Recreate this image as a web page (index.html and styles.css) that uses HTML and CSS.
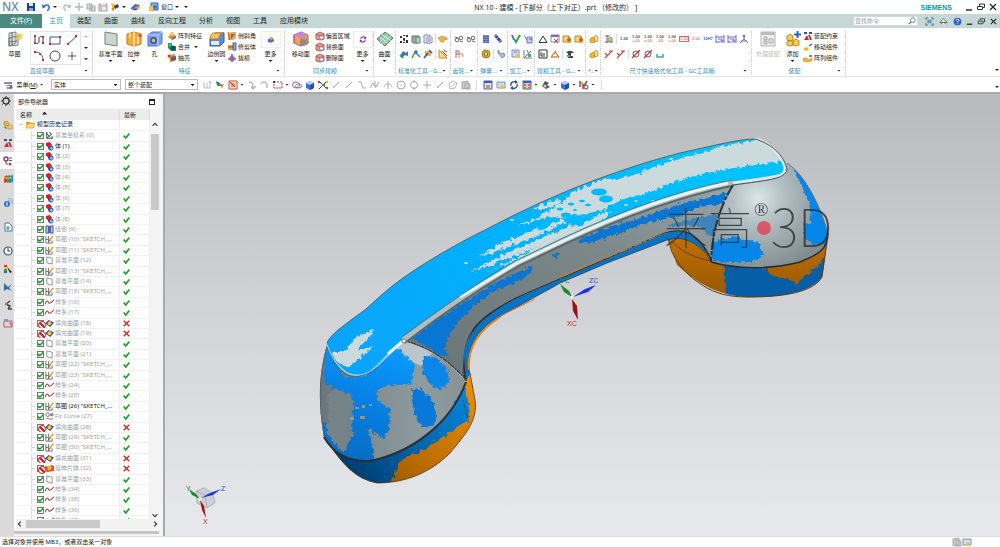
FILE: index.html
```html
<!DOCTYPE html>
<html lang="zh-CN">
<head>
<meta charset="utf-8">
<title>NX 10 - 建模</title>
<link rel="stylesheet" href="styles.css">
</head>
<body>
<svg class="defs" aria-hidden="true">
<symbol id="save" viewBox="0 0 10 10"><path d="M1 1h8v8H1z" fill="#1d3f94"/><path d="M3 1h4v3H3z" fill="#dfe7f5"/><path d="M3 6h4v3H3z" fill="#8fa5d0"/></symbol>
<symbol id="undo" viewBox="0 0 10 10"><path d="M3 4.500C5 2 9 3 8 6.500 7.500 8 6 8.500 6 8.500" fill="none" stroke="#2f6fd0" stroke-width="1.500"/><path d="M1 2l.5 4.500L5 5z" fill="#2f6fd0"/></symbol>
<symbol id="redo" viewBox="0 0 10 10"><path d="M7 4.500C5 2 1 3 2 6.500 2.500 8 4 8.500 4 8.500" fill="none" stroke="#a9b9c9" stroke-width="1.300"/><path d="M9 2l-.5 4.500L5 5z" fill="#a9b9c9"/></symbol>
<symbol id="cut" viewBox="0 0 10 10"><path d="M5 1v8M1 5h8" stroke="#b5b5b5" stroke-width="1.400"/></symbol>
<symbol id="copy" viewBox="0 0 10 10"><path d="M1 2h5v5H1zM4 4h5v5H4z" fill="#d8d8d8" stroke="#a8a8a8"/></symbol>
<symbol id="paste" viewBox="0 0 10 10"><path d="M1 2h8v7H1z" fill="#c5c5c5" stroke="#aaa"/><path d="M3 1h4v2H3zM4 5h4v3H4z" fill="#eee"/></symbol>
<symbol id="brush" viewBox="0 0 10 10"><path d="M1 1l6 2-4 6z" fill="#f3c12d"/><path d="M4 4l4-2 1 3-4 2z" fill="#2c3e8e"/><circle cx="3" cy="7" r="1.500" fill="#dd8d1e"/></symbol>
<symbol id="wave" viewBox="0 0 10 10"><path d="M0 6l4-4 5 1-3 5z" fill="#3f6bd0"/><path d="M4 5l3-1 2 2-4 2z" fill="#f0a020"/><path d="M0 6l3 2 3-1" stroke="#1d3f94" fill="none"/></symbol>
<symbol id="window" viewBox="0 0 10 10"><path d="M2 1h7v7H2z" fill="#8bb6ea" stroke="#2c61b5"/><path d="M0 4h4v5H0z" fill="#f5c842"/><circle cx="6" cy="5" r="2" fill="#3a6fd0"/></symbol>
<symbol id="min" viewBox="0 0 10 10"><path d="M2 8h6" stroke="#222" stroke-width="1.400"/></symbol>
<symbol id="restore" viewBox="0 0 10 10"><path d="M1.500 4.500h5v3h-5zM3.500 4V2h5v3.500H7" fill="none" stroke="#333"/></symbol>
<symbol id="close" viewBox="0 0 10 10"><path d="M2 2l6 6M8 2L2 8" stroke="#222" stroke-width="1.200"/></symbol>
<symbol id="lens" viewBox="0 0 10 10"><circle cx="6" cy="4" r="3" fill="none" stroke="#666"/><path d="M4 6L1 9" stroke="#666" stroke-width="1.400"/></symbol>
<symbol id="full" viewBox="0 0 10 10"><path d="M1 3V1h2M7 1h2v2M9 7v2H7M3 9H1V7" fill="none" stroke="#555"/><path d="M2.500 3h5v4h-5z" fill="#5d9cdd"/></symbol>
<symbol id="hat" viewBox="0 0 10 10"><path d="M1 6l4-4 4 4zM2.500 8L5 5.500 7.500 8" fill="#fff" stroke="#555"/></symbol>
<symbol id="help" viewBox="0 0 10 10"><circle cx="5" cy="5" r="4.300" fill="#2f63c9"/><path d="M3.500 4c0-2 3-2 3 0 0 1-1.500 1-1.500 2M5 7v1" fill="none" stroke="#fff"/></symbol>
<symbol id="b-sketch" viewBox="0 0 16 16"><path d="M2 2l7-1v11l-7 3z" fill="#d5d9da" stroke="#7c8587"/><path d="M2 7l9-2v9l-9 1zM5 2v12M2 11l8-1" fill="none" stroke="#6d7678"/><path d="M12 2v7M9 5h7M10 3l5 5M15 3l-5 5" stroke="#f4cd24" stroke-width="1.200"/></symbol>
<symbol id="g-profile" viewBox="0 0 12 12"><path d="M2 2v6c0 2 4 2 4 0V4c0-2 4-2 4 0v5" fill="none" stroke="#444"/><path d="M1 1h2v2H1zM1 8h2v2H1zM9 8h2v2H9zM9 2h2v2H9z" fill="#d02b2b"/></symbol>
<symbol id="g-rect" viewBox="0 0 12 12"><path d="M1 3h10v7H1z" fill="#fff" stroke="#555"/><path d="M10 2h2v2h-2zM0 9h2v2H0z" fill="#d02b2b"/></symbol>
<symbol id="g-line" viewBox="0 0 12 12"><path d="M2 10l9-8" stroke="#555"/><path d="M1 9h2v2H1zM9 1h2v2H9z" fill="#d02b2b"/></symbol>
<symbol id="g-arc" viewBox="0 0 12 12"><path d="M2 2c6 0 8 4 8 8" fill="none" stroke="#555"/><path d="M1 1h2v2H1zM9 9h2v2H9zM6 3h2v2H6z" fill="#d02b2b"/></symbol>
<symbol id="g-circle" viewBox="0 0 12 12"><circle cx="6" cy="6" r="5" fill="#fff" stroke="#444"/></symbol>
<symbol id="g-plus" viewBox="0 0 12 12"><path d="M6 2v8M2 6h8" stroke="#555"/></symbol>
<symbol id="b-plane" viewBox="0 0 16 16"><path d="M2 1l12 2v12L2 13z" fill="#cbd5d2" stroke="#74807c"/></symbol>
<symbol id="b-extrude" viewBox="0 0 16 16"><path d="M1 3l7-2 7 2v10l-7 2-7-2z" fill="#f2ab3c" stroke="#c77b16"/><path d="M8 1v14M4 2v5M12 4v9" stroke="#fde2ac" stroke-width="1.500"/><path d="M11 5l4-2 1 3z" fill="#e6442e"/></symbol>
<symbol id="b-hole" viewBox="0 0 16 16"><path d="M1 4l4-3h10v11l-4 3H1z" fill="#7b9fe8" stroke="#5577c4"/><path d="M1 4h10v11M11 4l4-3" stroke="#c4d6ff" fill="none"/><circle cx="6.500" cy="9.500" r="3.500" fill="#3a5bb4"/><circle cx="6.500" cy="9.500" r="1.700" fill="#f0c148"/></symbol>
<symbol id="array" viewBox="0 0 10 10"><path d="M1 6l3-3 4 1 1 2-4 3z" fill="#e98f22"/><circle cx="5" cy="3" r="2" fill="#f5c653"/><path d="M5 7l4-2v2L5 9z" fill="#4470cb"/></symbol>
<symbol id="unite" viewBox="0 0 10 10"><path d="M1 1h4v3h4v5H4L1 6z" fill="#1f9a5e"/><circle cx="6" cy="6" r="2.500" fill="#164f66"/><circle cx="3" cy="3" r="1.500" fill="#3cc16f"/></symbol>
<symbol id="shell" viewBox="0 0 10 10"><path d="M2 2l6-1v7L3 9z" fill="#e98f22"/><path d="M4 4l5-1v4L4 8z" fill="#3c61b5"/><circle cx="2" cy="3" r="1.500" fill="#d13c2c"/></symbol>
<symbol id="b-edge" viewBox="0 0 16 16"><path d="M1 8l5-6h9v9l-4 4H1z" fill="#5b8bdd" stroke="#37599e"/><path d="M1 8c0-4 2-6 5-6h9c-3 0-5 2-5 6z" fill="#f5c35a" stroke="#b77c1a"/><path d="M2 10h8v4H2z" fill="#dfe9fb"/></symbol>
<symbol id="chamfer" viewBox="0 0 10 10"><path d="M1 3l3-2h5v6L6 9H1z" fill="#f0a945"/><path d="M4 3h4l-4 5z" fill="#476fd0"/><path d="M1 1l2 8" stroke="#d2452d"/></symbol>
<symbol id="trim" viewBox="0 0 10 10"><path d="M1 3h5v5H1z" fill="#ef9f35"/><path d="M6 1h3v7H6z" fill="#7fa8ee" stroke="#3a61b8"/><path d="M1 5h6" stroke="#c23e2a"/></symbol>
<symbol id="draft" viewBox="0 0 10 10"><path d="M5 1l4 5-4 3-4-3z" fill="#6f93dd"/><path d="M5 1v8M1 6h8" stroke="#c9414e"/></symbol>
<symbol id="more" viewBox="0 0 10 10"><path d="M1 5l3-2 4 1 1 3-4 2-4-1z" fill="#3f70cf"/><circle cx="5.500" cy="3.500" r="2" fill="#f0a030"/></symbol>
<symbol id="b-move" viewBox="0 0 16 16"><path d="M1 4l7-3 7 3v8l-7 3-7-3z" fill="#f2a548" stroke="#a15ca4"/><path d="M8 1l7 3-7 3-7-3z" fill="#c486d8"/><path d="M8 7v8M1 4v8" stroke="#a15ca4"/><path d="M11 6v9M7 11h9M8 8l6 6M14 8l-6 6" stroke="#888" stroke-width="1.200"/></symbol>
<symbol id="face" viewBox="0 0 10 10"><path d="M1 3l4-2 4 2v5L5 9 1 8z" fill="#f2a548" stroke="#a15ca4"/><path d="M1 3l4 2 4-2" fill="none" stroke="#a15ca4"/><circle cx="6.500" cy="6.500" r="2" fill="#fff" stroke="#b56a8a"/></symbol>
<symbol id="sync" viewBox="0 0 10 10"><path d="M2 4c1-3 5-3 6-1M8 6c-1 3-5 3-6 1" fill="none" stroke="#8b3bb0" stroke-width="1.500"/><path d="M9 1v4L6 4zM1 9V5l3 1z" fill="#8b3bb0"/></symbol>
<symbol id="b-surf" viewBox="0 0 16 16"><path d="M0 8l8-7 8 6-8 8z" fill="#8fc4a4" stroke="#4c7f63"/><path d="M2.500 6l8 6M5 3.500l8.500 6M3 11l8-7.500M5.500 13L13.500 5" stroke="#e6f4ec" stroke-width=".8"/></symbol>
<symbol id="dots" viewBox="0 0 10 10"><path d="M1 2h2v2H1zM4 4h2v2H4zM7 1h2v2H7zM1 7h2v2H1zM7 6h2v3H7zM4 1h2v1H4zM4 8h2v1H4z" fill="#333"/><path d="M4 6h2v1H4z" fill="#d33"/></symbol>
<symbol id="db" viewBox="0 0 10 10"><path d="M1 2h7v6c0 1.500-7 1.500-7 0z" fill="#9aaab0" stroke="#66757c"/><path d="M5 3h4v6H5z" fill="#b8d3c5" stroke="#5f8672"/></symbol>
<symbol id="sheet" viewBox="0 0 10 10"><path d="M1 1h6v8H1z" fill="#dfe4f4" stroke="#8793b7"/><path d="M4 3h5v6H4z" fill="#fff" stroke="#8793b7"/><path d="M5 5h3M5 7h3" stroke="#76a"/></symbol>
<symbol id="hand" viewBox="0 0 10 10"><path d="M0 4l4-2 5 2v2L6 5v3H3z" fill="#f0b64c" stroke="#c07d1c" stroke-width=".6"/></symbol>
<symbol id="tri" viewBox="0 0 10 10"><path d="M1 7l3-5 3 2 2-2v5L6 6 3 9z" fill="#3a6fd0"/><path d="M1 6l3 3" stroke="#2ea14e" stroke-width="1.500"/></symbol>
<symbol id="tri2" viewBox="0 0 10 10"><path d="M1 9l3-6 3 3 2 2" fill="none" stroke="#2ea14e" stroke-width="1.500"/><circle cx="5" cy="3" r="1.700" fill="#3a6fd0"/></symbol>
<symbol id="tri3" viewBox="0 0 10 10"><path d="M2 2h6v5H2z" fill="#f2b23c"/><path d="M1 9l4-5M6 1l3 3" stroke="#2c5fc0" stroke-width="1.700"/></symbol>
<symbol id="ruler" viewBox="0 0 10 10"><path d="M1 1v8h8z" fill="#f7dd90" stroke="#c2902d"/><path d="M4 2l5 5M6 1l3 2" stroke="#d33"/></symbol>
<symbol id="gears" viewBox="0 0 10 10"><circle cx="3" cy="6" r="1.800" fill="none" stroke="#666"/><circle cx="7" cy="4" r="1.800" fill="none" stroke="#666"/><path d="M1 3l3 1M6 7l3 1" stroke="#666"/></symbol>
<symbol id="gear3" viewBox="0 0 10 10"><path d="M2 1v8M2 2h3v3H2" fill="none" stroke="#8e62b4"/><path d="M5 9V5h4v3" fill="none" stroke="#d88b2b"/></symbol>
<symbol id="spring" viewBox="0 0 10 10"><path d="M2 1h6v8H2z" fill="#7d8ed8"/><path d="M2 2.500h6M2 4.500h6M2 6.500h6M2 8.500h6" stroke="#4a56a6" stroke-width=".8"/></symbol>
<symbol id="spring2" viewBox="0 0 10 10"><path d="M2 1l6 7" stroke="#3746a8" stroke-width="3"/><path d="M1 3l3-2M3 5l3-2M5 8l3-2" stroke="#cdd4fa" stroke-width=".7"/></symbol>
<symbol id="disc" viewBox="0 0 10 10"><circle cx="5" cy="5" r="4" fill="#e6b83c" stroke="#a27a17"/><ellipse cx="5" cy="5" rx="1.500" ry="2.200" fill="#fff" stroke="#77560b"/></symbol>
<symbol id="tag" viewBox="0 0 10 10"><path d="M2 1l3 4 3-1 1 3-3 2-4-5z" fill="#b8b8dd" stroke="#66689d" stroke-width=".7"/></symbol>
<symbol id="vcheck" viewBox="0 0 10 10"><path d="M1 1l2 5" stroke="#4b72d6" stroke-width="2"/><path d="M3 5l2 3 4-7" fill="none" stroke="#2aac3f" stroke-width="2"/></symbol>
<symbol id="mach" viewBox="0 0 10 10"><path d="M1 1l3 5M4 3h5v6H4z" fill="#c5cff0" stroke="#6f7fb8"/><path d="M6 5h3" stroke="#e33"/></symbol>
<symbol id="sheetg" viewBox="0 0 10 10"><path d="M1 1h7v7H1z" fill="#d5dcf2" stroke="#8792bb"/><path d="M5 5h4v4H5z" fill="#e3c45e"/><path d="M3 3h3" stroke="#6b79b0"/></symbol>
<symbol id="axes" viewBox="0 0 10 10"><path d="M1 1v8h8M2 8l6-6M4 1l3 7" fill="none" stroke="#777"/><path d="M5 5h3v3H5z" fill="#59a868"/></symbol>
<symbol id="delta" viewBox="0 0 10 10"><path d="M1 8.500L5 2l4 6.500z" fill="none" stroke="#333"/></symbol>
<symbol id="calx" viewBox="0 0 10 10"><path d="M1 1h8v7H1z" fill="#fff" stroke="#88a"/><path d="M1 1h8v2H1z" fill="#86b"/><path d="M4 5l4 4M8 5L4 9" stroke="#d33"/></symbol>
<symbol id="star" viewBox="0 0 10 10"><path d="M1 2h6v6H1z" fill="#f3d57c" stroke="#ba8c2e"/><path d="M5 4h4v5H5z" fill="#f1b32b"/><path d="M7 3v5M5 6h4" stroke="#c33"/></symbol>
<symbol id="boxb" viewBox="0 0 10 10"><path d="M1 1h8v8H1z" fill="#fff" stroke="#333"/><path d="M3 3v4h4M4 5h3" stroke="#333" fill="none"/></symbol>
<symbol id="slope" viewBox="0 0 10 10"><path d="M1 8l5-6M1 8h8" stroke="#c79a3a" stroke-width="1.400"/><path d="M5 3l4 5" stroke="#c33"/></symbol>
<symbol id="pick" viewBox="0 0 10 10"><path d="M1 4c2-3 6-3 8 0H6v3h2v2H3V4z" fill="#444"/><path d="M2 6h3v2H2z" fill="#5aa1bd"/></symbol>
<symbol id="cubes" viewBox="0 0 10 10"><path d="M1 5l3-2 2 1v4L3 9 1 8z" fill="#eab731" stroke="#a47b15" stroke-width=".6"/><path d="M5 3l2-2 2 2v4L6 8z" fill="#f6d978" stroke="#a47b15" stroke-width=".6"/></symbol>
<symbol id="dim0" viewBox="0 0 10 10"><path d="M1 2h5M3 1v8M7 3v5M1 8h8" stroke="#a55"/><path d="M4 4h4v3H4z" fill="#bcd7bd" stroke="#6a6"/></symbol>
<symbol id="d-blue" viewBox="0 0 10 10"><path d="M1 1v8M9 1v8M1 3h8M3 5h4M1 8h4M6 6h2v2H6z" fill="none" stroke="#6a6ad8"/></symbol>
<symbol id="d-tree" viewBox="0 0 10 10"><path d="M5 1v4M1 9l4-4 4 4M2 7h6" fill="none" stroke="#6a6ad8"/><circle cx="5" cy="2" r="1.300" fill="#6a6ad8"/></symbol>
<symbol id="r-slash" viewBox="0 0 10 10"><path d="M1 9l7-7M1 4l2 2M5 2h4" fill="none" stroke="#cc4848" stroke-width="1.200"/></symbol>
<symbol id="r-circ" viewBox="0 0 10 10"><circle cx="5" cy="5" r="3" fill="none" stroke="#666"/><path d="M1 9l8-8" stroke="#d33" stroke-width="1.200"/></symbol>
<symbol id="tray" viewBox="0 0 10 10"><path d="M2 5v3h6V5" fill="none" stroke="#4aa59a" stroke-width="1.500"/></symbol>
<symbol id="b-proc" viewBox="0 0 16 16"><path d="M1 1h14v14H1z" fill="#eee" stroke="#b4b4b4"/><path d="M1 1h14v3H1z" fill="#bbb"/><path d="M4 6h3v3H4zM4 10h3v3H4zM9 8h4v4H9z" fill="#ddd" stroke="#aaa"/></symbol>
<symbol id="b-add" viewBox="0 0 16 16"><path d="M2 5l3-2 3 2v4l-3 1-3-1zM2 11l3-2 3 2v3l-3 1-3-1zM8 10l3-2 3 2v4l-3 1-3-1z" fill="#f3cc5e" stroke="#bb8b1d"/><path d="M12.500 0v7M9 3.500h7" stroke="#2d62c9" stroke-width="2"/></symbol>
<symbol id="constr" viewBox="0 0 10 10"><path d="M1 1h3v2H1zM6 1h3v2H6z" fill="#3350a8"/><path d="M1 9l3-5 2 5z" fill="#c22f3b"/><path d="M5 4h2l2 5H7z" fill="#d02b2b"/></symbol>
<symbol id="movec" viewBox="0 0 10 10"><path d="M1 6l3-1 2 2-2 2-3-1z" fill="#f0b930"/><path d="M6 4l3-2" stroke="#2d62c9" stroke-width="1.500"/></symbol>
<symbol id="arrc" viewBox="0 0 10 10"><path d="M0 5h4l1 2 4-2v3L4 9 0 8z" fill="#f0b930" stroke="#b88515" stroke-width=".5"/><path d="M6 3h3" stroke="#2d62c9" stroke-width="1.500"/></symbol>
<symbol id="menu" viewBox="0 0 10 10"><path d="M0 2h8v2H0zM2 5h6v1H2zM3 7h5v2H3z" fill="#8191a8"/><path d="M5 4l4 3-2 2z" fill="#567"/></symbol>
<symbol id="t-a" viewBox="0 0 10 10"><path d="M2 2v6h3V3M5 8h3V2M7 3l1-2 1 2" fill="none" stroke="#bbb"/></symbol>
<symbol id="t-b" viewBox="0 0 10 10"><path d="M1 1l4 2v3H2z" fill="#2aa06a"/><path d="M5 4h4l-2 5z" fill="#e7a926"/><path d="M2 2l5 4" stroke="#2853b2"/></symbol>
<symbol id="t-c" viewBox="0 0 10 10"><path d="M1 1h8v8H1z" fill="#fbe4de" stroke="#d24a36"/><path d="M3 3h4v4H3z" fill="#e8a626"/><path d="M2 2l5 5" stroke="#b33"/></symbol>
<symbol id="t-d" viewBox="0 0 10 10"><path d="M2 2c4 0 4 2 4 6M4 6l2 3 3-3" fill="none" stroke="#b5b5b5" stroke-width="1.300"/></symbol>
<symbol id="t-e" viewBox="0 0 10 10"><path d="M1 4c1-3 5-3 6 1v3" fill="none" stroke="#c5c5c5" stroke-width="1.800"/></symbol>
<symbol id="t-rect" viewBox="0 0 10 10"><path d="M1 2h8v6H1z" fill="none" stroke="#c03a3a" stroke-dasharray="2 1"/><path d="M0 1h2v2H0z" fill="#444"/></symbol>
<symbol id="t-rings" viewBox="0 0 10 10"><ellipse cx="4" cy="5" rx="3.500" ry="3" fill="none" stroke="#778"/><ellipse cx="6.500" cy="6" rx="3" ry="2" fill="none" stroke="#a66"/></symbol>
<symbol id="t-cube" viewBox="0 0 10 10"><path d="M1 3l4-2 4 2v5L5 10 1 8z" fill="#3a74d6"/><path d="M1 3l4-2 4 2-4 2z" fill="#b9d6ff"/><path d="M5 5l4-2v5l-4 2z" fill="#2450a8"/></symbol>
<symbol id="t-snap" viewBox="0 0 10 10"><path d="M1 1l8 8M9 1L1 9" stroke="#444"/><path d="M0 1h2v2H0zM8 7h2v2H8z" fill="#d33"/><path d="M4 4h3v2H4z" fill="#2da24a"/><path d="M8 1h2v2H8z" fill="#e9b021"/></symbol>
<symbol id="t-line" viewBox="0 0 10 10"><path d="M2 8l6-6" stroke="#aaa"/></symbol>
<symbol id="t-s" viewBox="0 0 10 10"><path d="M1 2h3l2 6h3" fill="none" stroke="#aaa"/></symbol>
<symbol id="t-m" viewBox="0 0 10 10"><path d="M0 8l3-5 3 4 3-5M5 1v7" fill="none" stroke="#aaa"/></symbol>
<symbol id="t-arc" viewBox="0 0 10 10"><path d="M1 7c1-4 7-4 8 0M5 1v8" fill="none" stroke="#aaa"/></symbol>
<symbol id="t-dotc" viewBox="0 0 10 10"><circle cx="5" cy="5" r="4" fill="none" stroke="#aaa"/><path d="M4.500 4.500h1v1h-1z" fill="#777"/></symbol>
<symbol id="t-circ" viewBox="0 0 10 10"><circle cx="5" cy="5" r="3.500" fill="none" stroke="#aaa"/><path d="M5 0v3M5 7v3" stroke="#aaa"/></symbol>
<symbol id="t-plus" viewBox="0 0 10 10"><path d="M5 1v8M1 5h8" stroke="#aaa"/></symbol>
<symbol id="t-poly" viewBox="0 0 10 10"><path d="M1 4l4-3 4 2-2 5-5 1z" fill="none" stroke="#b5b5b5"/><path d="M3 7l4-4" stroke="#b5b5b5"/></symbol>
<symbol id="t-grid" viewBox="0 0 10 10"><path d="M1 2l6-1v7L1 9zM4 3l5 1v5H4z" fill="#ccc" stroke="#aaa"/></symbol>
<symbol id="v-a" viewBox="0 0 10 10"><path d="M1 1h8v8H1z" fill="#d5e1f7" stroke="#3a5fb0"/><path d="M1 1h8v2H1z" fill="#3a5fb0"/><path d="M3 5h4v3H3z" fill="#e1982a"/></symbol>
<symbol id="v-b" viewBox="0 0 10 10"><path d="M1 2h8v6H1z" fill="#cfdff5" stroke="#7c93bd"/><circle cx="6" cy="7" r="2" fill="#efbd52"/></symbol>
<symbol id="v-c" viewBox="0 0 10 10"><path d="M2 6c-1-4 3-5 5-4M8 4c1 4-3 5-5 4" fill="none" stroke="#2f5080" stroke-width="1.300"/><path d="M6 0l3 2-3 2zM4 6L1 8l3 2z" fill="#2f5080"/></symbol>
<symbol id="v-d" viewBox="0 0 10 10"><path d="M1 1h8v8H1z" fill="#f4c9a8" stroke="#2d62c9"/><path d="M1 1h8v2H1z" fill="#2d62c9"/><path d="M2 4h2v2H2zM6 4h2v2H6zM2 7h2v1H2zM6 7h2v1H6z" fill="#df6b27"/></symbol>
<symbol id="v-e" viewBox="0 0 10 10"><path d="M1 6l3-5 4 2-2 2 3 2-4 2z" fill="#555"/><circle cx="4" cy="6" r="1.500" fill="#ccc"/></symbol>
<symbol id="v-f" viewBox="0 0 10 10"><path d="M1 1v6M4 4v5M8 1L5 6" stroke="#c33" stroke-width="1.500"/><circle cx="7" cy="7" r="2" fill="#dee" stroke="#456"/><path d="M1 3h3" stroke="#292"/></symbol>
<symbol id="cog" viewBox="0 0 10 10"><circle cx="5" cy="5" r="3" fill="none" stroke="#333" stroke-width="1.300"/><path d="M5 0v2M5 8v2M0 5h2M8 5h2M1.500 1.500l1.500 1.500M7 7l1.500 1.500M8.500 1.500L7 3M3 7L1.500 8.500" stroke="#333"/></symbol>
<symbol id="k-asm" viewBox="0 0 10 10"><path d="M1 2l3-1 2 2-1 3-4-1z" fill="#efb92d" stroke="#9d7512" stroke-width=".5"/><path d="M5 5h4v4H5z" fill="#f6cf63" stroke="#9d7512" stroke-width=".5"/><path d="M2 6v2h2" stroke="#2d62c9" fill="none"/></symbol>
<symbol id="k-part" viewBox="0 0 10 10"><circle cx="3" cy="3" r="2" fill="none" stroke="#a52a5e" stroke-width="1.400"/><path d="M6 2h3M3 5v3h2" stroke="#555" fill="none"/><circle cx="7" cy="8" r="1.500" fill="#b6407a"/><path d="M6 4h3v1H6z" fill="#557"/></symbol>
<symbol id="k-lib" viewBox="0 0 10 10"><path d="M1 3l3-2v7L1 9z" fill="#d43d2c"/><path d="M4 2l3-1v7L4 9z" fill="#38a348"/><path d="M6 2l4-1v7L6 9z" fill="#2d87ca"/><path d="M1 4h8" stroke="#f4cf32"/></symbol>
<symbol id="k-web" viewBox="0 0 10 10"><circle cx="4" cy="6" r="3" fill="#2d6fc9"/><path d="M5 2c3 0 4 2 4 4M5 0c4 0 5 3 5 5" fill="none" stroke="#85aee3"/><path d="M4 4v4" stroke="#fff"/></symbol>
<symbol id="k-page" viewBox="0 0 10 10"><path d="M2 1h4l3 3v5H2z" fill="#fff" stroke="#4278b4"/><path d="M5 4v4M3 6h4" stroke="#3597a8" stroke-width="1.200"/></symbol>
<symbol id="k-clock" viewBox="0 0 10 10"><circle cx="5" cy="5" r="4" fill="#fff" stroke="#355678" stroke-width="1.200"/><path d="M5 2v3h2" fill="none" stroke="#333"/></symbol>
<symbol id="k-color" viewBox="0 0 10 10"><path d="M1 1h3v2H1z" fill="#d33"/><path d="M1 3h3v2H1z" fill="#fc2"/><path d="M1 5h3v2H1z" fill="#2a4"/><path d="M1 7h3v2H1z" fill="#26c"/><path d="M4 3l5 5-2 1z" fill="#222"/></symbol>
<symbol id="k-cut" viewBox="0 0 10 10"><path d="M1 1l4 4 4-3-3 4 3 3-5-2-3 2z" fill="#2f6cab"/></symbol>
<symbol id="k-robot" viewBox="0 0 10 10"><path d="M7 1L3 4l4 2-2 3M5 9h4" fill="none" stroke="#444" stroke-width="1.500"/><circle cx="3" cy="4" r="1.200" fill="#888"/></symbol>
<symbol id="k-box" viewBox="0 0 10 10"><path d="M1 3h8v6H1z" fill="#ecd3cf" stroke="#968"/><path d="M1 1h4v3H1z" fill="#7d9ac8"/><path d="M6 5h2v3" stroke="#c55" fill="none"/></symbol>
<symbol id="folder" viewBox="0 0 10 10"><path d="M0 2h4l1 1h4v6H1z" fill="#d9a21d"/><path d="M0 9l2-5h8L8 9z" fill="#ffda66" stroke="#b98311" stroke-width=".5"/></symbol>
<symbol id="n-csys" viewBox="0 0 10 10"><path d="M2 1v7h7M2 8l6-5M1 2l4 4M5 1l2 3" fill="none" stroke="#333"/><path d="M7 6h2v2H7z" fill="#2a6"/></symbol>
<symbol id="n-body" viewBox="0 0 10 10"><circle cx="6.500" cy="6.500" r="3" fill="#3c68cf"/><path d="M1 1l4-1 3 3-4 3-3-2z" fill="#cc2330"/><path d="M3 5l4 4" stroke="#223" stroke-width=".8"/><circle cx="7" cy="7" r="1.300" fill="#b9cdf5"/></symbol>
<symbol id="n-sew" viewBox="0 0 10 10"><path d="M1 1h3v8H1zM6 1h3v8H6z" fill="#a9c3f2" stroke="#2c4fa5"/><path d="M5 1v8" stroke="#c33" stroke-width="1.400"/></symbol>
<symbol id="n-sk" viewBox="0 0 10 10"><path d="M1 1v8h7V6M1 5h3v4M4 1v4" fill="none" stroke="#666"/><path d="M5 6l4-5" stroke="#e5961d" stroke-width="1.600"/><path d="M4 7l2-1" stroke="#333"/></symbol>
<symbol id="n-plane" viewBox="0 0 10 10"><path d="M2 1l6 1.500V9L2 7.500z" fill="#fff" stroke="#888"/></symbol>
<symbol id="n-spl" viewBox="0 0 10 10"><path d="M0 7c2-5 3-4 4-2s3 0 6-3" fill="none" stroke="#a83232" stroke-width="1.200"/></symbol>
<symbol id="n-fill" viewBox="0 0 10 10"><path d="M0 5l4-4 6 3-4 5z" fill="#2c4dae"/><circle cx="5" cy="4.800" r="2.200" fill="#ffc526"/></symbol>
<symbol id="n-ext" viewBox="0 0 10 10"><path d="M0 2l3 1 4-2 3 1v6L7 8 3 9 0 8z" fill="#e4502a"/><path d="M3 3l4-1v4L3 7z" fill="#ffbd33"/></symbol>
<symbol id="n-fit" viewBox="0 0 10 10"><circle cx="3" cy="3" r="2" fill="none" stroke="#666"/><path d="M5 4l4-2M1 8c2-3 4 2 8-1" fill="none" stroke="#a44"/><circle cx="8" cy="3" r="1.200" fill="none" stroke="#666"/></symbol>
<symbol id="ok" viewBox="0 0 10 10"><path d="M1 5l3 3.500L9 2" fill="none" stroke="#12a51a" stroke-width="2.400"/></symbol>
<symbol id="no" viewBox="0 0 10 10"><path d="M1 1l8 8M9 1L1 9" stroke="#d81e1e" stroke-width="1.800"/></symbol>
<symbol id="left" viewBox="0 0 10 10"><path d="M6 2L3 5l3 3" fill="none" stroke="#333" stroke-width="1.400"/></symbol>
<symbol id="right" viewBox="0 0 10 10"><path d="M4 2l3 3-3 3" fill="none" stroke="#333" stroke-width="1.400"/></symbol>
<symbol id="up" viewBox="0 0 10 10"><path d="M2 6l3-3 3 3" fill="none" stroke="#333" stroke-width="1.400"/></symbol>
<symbol id="down" viewBox="0 0 10 10"><path d="M2 4l3 3 3-3" fill="none" stroke="#333" stroke-width="1.400"/></symbol>
</svg>

<div class="app">
<header class="titlebar">
  <div class="quick">
    <span class="nx">NX</span>
    <button class="save" aria-label="保存"><svg><use href="#save"/></svg></button>
    <button class="drop" aria-label="撤销"><svg><use href="#undo"/></svg></button>
    <button aria-label="重做"><svg><use href="#redo"/></svg></button>
    <button aria-label="剪切"><svg><use href="#cut"/></svg></button>
    <button aria-label="复制"><svg><use href="#copy"/></svg></button>
    <button aria-label="粘贴"><svg><use href="#paste"/></svg></button>
    <button class="drop" aria-label="画笔"><svg><use href="#brush"/></svg></button>
    <button class="wide" aria-label="触控"><svg><use href="#wave"/></svg></button>
    <button class="drop"><svg><use href="#window"/></svg>窗口</button>
    <button class="drop" aria-label="自定义"></button>
  </div>
  <h1>NX 10 - 建模 - [下部分（上下对正）.prt （修改的） ]</h1>
  <strong class="brand">SIEMENS</strong>
  <div class="wins">
    <button aria-label="最小化"><svg><use href="#min"/></svg></button>
    <button aria-label="还原"><svg><use href="#restore"/></svg></button>
    <button aria-label="关闭"><svg><use href="#close"/></svg></button>
  </div>
</header>

<nav class="tabs">
  <button class="file">文件(F)</button>
  <button class="on">主页</button>
  <button>装配</button><button>曲面</button><button>曲线</button><button>反向工程</button><button>分析</button><button>视图</button><button>工具</button><button>应用模块</button>
  <label class="search"><input type="text" placeholder="查找命令" aria-label="查找命令"><svg><use href="#lens"/></svg></label>
  <div class="wins tools">
    <button aria-label="全屏"><svg><use href="#full"/></svg></button>
    <button aria-label="折叠"><svg><use href="#hat"/></svg></button>
    <button aria-label="帮助"><svg><use href="#help"/></svg></button>
  </div>
  <div class="wins">
    <button aria-label="最小化窗口"><svg><use href="#min"/></svg></button>
    <button aria-label="还原窗口"><svg><use href="#restore"/></svg></button>
    <button aria-label="关闭窗口"><svg><use href="#close"/></svg></button>
  </div>
</nav>

<section class="ribbon">
  <div class="group g-sketch">
    <div class="body">
      <button class="big"><svg><use href="#b-sketch"/></svg>草图</button>
      <div class="gallery">
        <button aria-label="轮廓"><svg><use href="#g-profile"/></svg></button><button aria-label="矩形"><svg><use href="#g-rect"/></svg></button><button aria-label="直线"><svg><use href="#g-line"/></svg></button>
        <button aria-label="圆弧"><svg><use href="#g-arc"/></svg></button><button aria-label="圆"><svg><use href="#g-circle"/></svg></button><button aria-label="点"><svg><use href="#g-plus"/></svg></button>
      </div>
      <div class="pager"><i class="caret dim"></i><i class="caret"></i><i class="caret"></i></div>
    </div>
    <footer>直接草图<i class="caret"></i></footer>
  </div>
  <div class="group g-feature">
    <div class="body">
      <button class="big plane"><svg><use href="#b-plane"/></svg>基准平面<i class="caret"></i></button>
      <button class="big"><svg><use href="#b-extrude"/></svg>拉伸<i class="caret"></i></button>
      <button class="big"><svg><use href="#b-hole"/></svg>孔</button>
      <div class="list"><button><svg><use href="#array"/></svg>阵列特征</button><button class="drop"><svg><use href="#unite"/></svg>合并</button><button><svg><use href="#shell"/></svg>抽壳</button></div>
      <button class="big"><svg><use href="#b-edge"/></svg>边倒圆<i class="caret"></i></button>
      <div class="list"><button><svg><use href="#chamfer"/></svg>倒斜角</button><button><svg><use href="#trim"/></svg>修剪体</button><button><svg><use href="#draft"/></svg>拔模</button></div>
      <button class="big more"><svg><use href="#more"/></svg>更多<i class="caret"></i></button>
    </div>
    <footer>特征<i class="caret"></i></footer>
  </div>
  <div class="group g-sync">
    <div class="body">
      <button class="big wide"><svg><use href="#b-move"/></svg>移动面</button>
      <div class="list"><button><svg><use href="#face"/></svg>偏置区域</button><button><svg><use href="#face"/></svg>替换面</button><button><svg><use href="#face"/></svg>删除面</button></div>
      <button class="big more"><svg><use href="#sync"/></svg>更多<i class="caret"></i></button>
    </div>
    <footer>同步建模<i class="caret"></i></footer>
  </div>
  <div class="group g-surf">
    <div class="body"><button class="big"><svg><use href="#b-surf"/></svg>曲面<i class="caret"></i></button></div>
  </div>
  <div class="group g-std">
    <div class="icons">
      <div><button aria-label="属性"><svg><use href="#dots"/></svg></button><button aria-label="数据"><svg><use href="#db"/></svg></button><button aria-label="图纸"><svg><use href="#sheet"/></svg></button><button class="split" aria-label="工具"><svg><use href="#hand"/></svg></button></div>
      <div><button aria-label="部件"><svg><use href="#tri"/></svg></button><button aria-label="坐标"><svg><use href="#tri2"/></svg></button><button aria-label="方向"><svg><use href="#tri3"/></svg></button><button class="split" aria-label="测量"><svg><use href="#ruler"/></svg></button></div>
    </div>
    <footer>标准化工具 - G...<i class="caret"></i></footer>
  </div>
  <div class="group g-gear">
    <div class="icons">
      <div><button aria-label="柱齿轮"><svg><use href="#gears"/></svg></button><button aria-label="锥齿轮"><svg><use href="#gears"/></svg></button></div>
      <div><button aria-label="齿轮图"><svg><use href="#gear3"/></svg></button></div>
    </div>
    <footer>齿轮...<i class="caret"></i></footer>
  </div>
  <div class="group g-spring">
    <div class="icons">
      <div><button aria-label="压簧"><svg><use href="#spring"/></svg></button><button aria-label="拉簧"><svg><use href="#spring2"/></svg></button></div>
      <div><button aria-label="碟簧"><svg><use href="#disc"/></svg></button><button class="split" aria-label="删除弹簧"><svg><use href="#tag"/></svg></button></div>
    </div>
    <footer>弹簧...<i class="caret"></i></footer>
  </div>
  <div class="group g-mach">
    <div class="icons">
      <div><button aria-label="检查"><svg><use href="#vcheck"/></svg></button><button aria-label="加工"><svg><use href="#mach"/></svg></button></div>
      <div><button aria-label="模板"><svg><use href="#sheetg"/></svg></button><button aria-label="坐标轴"><svg><use href="#axes"/></svg></button></div>
    </div>
    <footer>加工...<i class="caret"></i></footer>
  </div>
  <div class="group g-model">
    <div class="icons">
      <div><button aria-label="三角"><svg><use href="#delta"/></svg></button><button aria-label="表"><svg><use href="#calx"/></svg></button><button aria-label="库"><svg><use href="#star"/></svg></button><button aria-label="重用"><svg><use href="#star"/></svg></button></div>
      <div><button aria-label="框"><svg><use href="#boxb"/></svg></button><button aria-label="斜度"><svg><use href="#slope"/></svg></button><button class="split" aria-label="拾取"><svg><use href="#pick"/></svg></button></div>
    </div>
    <footer>建模工具 - G...<i class="caret"></i></footer>
  </div>
  <div class="group g-tiny">
    <div class="icons">
      <div><button aria-label="装配一"><svg><use href="#cubes"/></svg></button></div>
      <div><button aria-label="装配二"><svg><use href="#cubes"/></svg></button></div>
    </div>
    <footer>*..<i class="caret"></i></footer>
  </div>
  <div class="group g-dim">
    <div class="icons">
      <div><button aria-label="尺寸格式"><svg><use href="#dim0"/></svg></button><button class="split num"><b>1.00</b></button><button class="num"><b>1.00</b><em>+.05</em></button><button class="num"><b>1.00</b><em>±.05</em></button><button class="num"><b>1.00</b><em>-.05</em></button><button class="num"><b>1.00</b><em>+.00</em></button><button class="num box"><em>1.00</em></button><button class="num"><em>3.00</em></button><button class="num blue"><b>10H7</b></button><button aria-label="配合"><svg><use href="#d-blue"/></svg></button><button aria-label="公差"><svg><use href="#d-blue"/></svg></button><button aria-label="层叠"><svg><use href="#d-tree"/></svg></button></div>
      <div><button aria-label="倒角"><svg><use href="#r-slash"/></svg></button><button aria-label="标注"><svg><use href="#r-slash"/></svg></button><button class="split" aria-label="直径"><svg><use href="#r-circ"/></svg></button><button aria-label="半径"><svg><use href="#r-circ"/></svg></button><button aria-label="沉孔"><svg><use href="#tray"/></svg></button></div>
    </div>
    <footer>尺寸快速格式化工具 - GC工具箱<i class="caret"></i></footer>
  </div>
  <div class="group g-asm">
    <div class="body">
      <button class="big wide" disabled><svg><use href="#b-proc"/></svg>处理装配</button>
      <button class="big"><svg><use href="#b-add"/></svg>添加<i class="caret"></i></button>
      <div class="list"><button><svg><use href="#constr"/></svg>装配约束</button><button><svg><use href="#movec"/></svg>移动组件</button><button><svg><use href="#arrc"/></svg>阵列组件</button></div>
    </div>
    <footer>装配<i class="caret"></i></footer>
  </div>
  <div class="rest"><i class="caret"></i></div>
</section>

<section class="toolbar">
  <button class="drop menu"><svg><use href="#menu"/></svg><span>菜单(<u>M</u>)</span></button>
  <select aria-label="类型过滤器"><option>实体</option></select>
  <select aria-label="选择范围"><option>整个装配</option></select>
  <div class="strip">
    <button aria-label="选择"><svg><use href="#t-a"/></svg></button>
    <button aria-label="过滤"><svg><use href="#t-b"/></svg></button>
    <button class="drop" aria-label="意图"><svg><use href="#t-c"/></svg></button>
    <button aria-label="路径"><svg><use href="#t-d"/></svg></button>
    <button aria-label="弯曲"><svg><use href="#t-e"/></svg></button>
    <button class="drop" aria-label="矩形选择"><svg><use href="#t-rect"/></svg></button>
    <button aria-label="环"><svg><use href="#t-rings"/></svg></button>
    <button aria-label="实体"><svg><use href="#t-cube"/></svg></button>
    <button aria-label="捕捉"><svg><use href="#t-snap"/></svg></button>
    <button aria-label="端点"><svg><use href="#t-line"/></svg></button>
    <button aria-label="中点"><svg><use href="#t-line"/></svg></button>
    <button aria-label="控制点"><svg><use href="#t-s"/></svg></button>
    <button aria-label="交点"><svg><use href="#t-m"/></svg></button>
    <button aria-label="弧点"><svg><use href="#t-arc"/></svg></button>
    <button aria-label="圆心"><svg><use href="#t-dotc"/></svg></button>
    <button aria-label="象限点"><svg><use href="#t-circ"/></svg></button>
    <button aria-label="现有点"><svg><use href="#t-plus"/></svg></button>
    <button aria-label="曲线点"><svg><use href="#t-line"/></svg></button>
    <button aria-label="面上点"><svg><use href="#t-poly"/></svg></button>
    <button aria-label="网格"><svg><use href="#t-grid"/></svg></button>
  </div>
  <div class="strip view">
    <button aria-label="适合窗口"><svg><use href="#v-a"/></svg></button>
    <button aria-label="缩放"><svg><use href="#v-b"/></svg></button>
    <button aria-label="旋转"><svg><use href="#v-c"/></svg></button>
    <button class="drop" aria-label="布局"><svg><use href="#v-d"/></svg></button>
    <button class="drop" aria-label="渲染"><svg><use href="#v-e"/></svg></button>
    <button class="drop" aria-label="方位"><svg><use href="#t-cube"/></svg></button>
    <button class="drop" aria-label="显示"><svg><use href="#v-f"/></svg></button>
  </div>
  <i class="caret end"></i>
</section>

<main>
  <aside class="dock">
    <button aria-label="设置"><svg><use href="#cog"/></svg></button>
    <button class="skip" aria-label="装配导航器"><svg><use href="#k-asm"/></svg></button>
    <button aria-label="约束导航器"><svg><use href="#constr"/></svg></button>
    <button class="on" aria-label="部件导航器"><svg><use href="#k-part"/></svg></button>
    <button aria-label="重用库"><svg><use href="#k-lib"/></svg></button>
    <button class="skip" aria-label="网页"><svg><use href="#k-web"/></svg></button>
    <button class="skip" aria-label="文档"><svg><use href="#k-page"/></svg></button>
    <button class="skip" aria-label="历史"><svg><use href="#k-clock"/></svg></button>
    <button aria-label="材料"><svg><use href="#k-color"/></svg></button>
    <button aria-label="加工向导"><svg><use href="#k-cut"/></svg></button>
    <button aria-label="机器人"><svg><use href="#k-robot"/></svg></button>
    <button aria-label="角色"><svg><use href="#k-box"/></svg></button>
  </aside>

  <section class="panel">
    <h2>部件导航器<button aria-label="最大化面板"></button></h2>
    <div class="tree">
      <div class="clip">
      <table>
        <thead><tr><th>名称<i class="sort"></i></th><th>最新</th></tr></thead>
        <tbody>
        <tr class="root"><td><span class="twist">-</span><svg><use href="#folder"/></svg>模型历史记录</td><td></td></tr>
        <tr><td><label><input type="checkbox" checked><svg><use href="#n-csys"/></svg>基准坐标系 (0)</label></td><td><svg><use href="#ok"/></svg></td></tr>
        <tr class="live"><td><label><input type="checkbox" checked><svg><use href="#n-body"/></svg>体 (1)</label></td><td><svg><use href="#ok"/></svg></td></tr>
        <tr><td><label><input type="checkbox" checked><svg><use href="#n-body"/></svg>体 (2)</label></td><td><svg><use href="#ok"/></svg></td></tr>
        <tr><td><label><input type="checkbox" checked><svg><use href="#n-body"/></svg>体 (3)</label></td><td><svg><use href="#ok"/></svg></td></tr>
        <tr><td><label><input type="checkbox" checked><svg><use href="#n-body"/></svg>体 (4)</label></td><td><svg><use href="#ok"/></svg></td></tr>
        <tr><td><label><input type="checkbox" checked><svg><use href="#n-body"/></svg>体 (5)</label></td><td><svg><use href="#ok"/></svg></td></tr>
        <tr><td><label><input type="checkbox" checked><svg><use href="#n-body"/></svg>体 (6)</label></td><td><svg><use href="#ok"/></svg></td></tr>
        <tr><td><label><input type="checkbox" checked><svg><use href="#n-body"/></svg>体 (7)</label></td><td><svg><use href="#ok"/></svg></td></tr>
        <tr><td><label><input type="checkbox" checked><svg><use href="#n-body"/></svg>体 (8)</label></td><td><svg><use href="#ok"/></svg></td></tr>
        <tr><td><label><input type="checkbox" checked><svg><use href="#n-sew"/></svg>缝合 (9)</label></td><td><svg><use href="#ok"/></svg></td></tr>
        <tr><td><label><input type="checkbox" checked><svg><use href="#n-sk"/></svg>草图 (10) "SKETCH_...</label></td><td><svg><use href="#ok"/></svg></td></tr>
        <tr><td><label><input type="checkbox" checked><svg><use href="#n-sk"/></svg>草图 (11) "SKETCH_...</label></td><td><svg><use href="#ok"/></svg></td></tr>
        <tr><td><label><input type="checkbox" checked><svg><use href="#n-plane"/></svg>基准平面 (12)</label></td><td><svg><use href="#ok"/></svg></td></tr>
        <tr><td><label><input type="checkbox" checked><svg><use href="#n-sk"/></svg>草图 (13) "SKETCH_...</label></td><td><svg><use href="#ok"/></svg></td></tr>
        <tr><td><label><input type="checkbox" checked><svg><use href="#n-plane"/></svg>基准平面 (14)</label></td><td><svg><use href="#ok"/></svg></td></tr>
        <tr><td><label><input type="checkbox" checked><svg><use href="#n-sk"/></svg>草图 (15) "SKETCH_...</label></td><td><svg><use href="#ok"/></svg></td></tr>
        <tr><td><label><input type="checkbox" checked><svg><use href="#n-spl"/></svg>样条 (16)</label></td><td><svg><use href="#ok"/></svg></td></tr>
        <tr><td><label><input type="checkbox" checked><svg><use href="#n-spl"/></svg>样条 (17)</label></td><td><svg><use href="#ok"/></svg></td></tr>
        <tr><td><label><input type="checkbox" class="ban"><svg><use href="#n-fill"/></svg>填充曲面 (18)</label></td><td><svg><use href="#no"/></svg></td></tr>
        <tr><td><label><input type="checkbox" class="ban"><svg><use href="#n-fill"/></svg>填充曲面 (19)</label></td><td><svg><use href="#no"/></svg></td></tr>
        <tr><td><label><input type="checkbox" checked><svg><use href="#n-plane"/></svg>基准平面 (20)</label></td><td><svg><use href="#ok"/></svg></td></tr>
        <tr><td><label><input type="checkbox" checked><svg><use href="#n-plane"/></svg>基准平面 (21)</label></td><td><svg><use href="#ok"/></svg></td></tr>
        <tr><td><label><input type="checkbox" checked><svg><use href="#n-sk"/></svg>草图 (22) "SKETCH_...</label></td><td><svg><use href="#ok"/></svg></td></tr>
        <tr><td><label><input type="checkbox" checked><svg><use href="#n-sk"/></svg>草图 (23) "SKETCH_...</label></td><td><svg><use href="#ok"/></svg></td></tr>
        <tr><td><label><input type="checkbox" checked><svg><use href="#n-spl"/></svg>样条 (24)</label></td><td><svg><use href="#ok"/></svg></td></tr>
        <tr><td><label><input type="checkbox" checked><svg><use href="#n-spl"/></svg>样条 (25)</label></td><td><svg><use href="#ok"/></svg></td></tr>
        <tr class="live"><td><label><input type="checkbox" checked><svg><use href="#n-sk"/></svg>草图 (26) "SKETCH_...</label></td><td><svg><use href="#ok"/></svg></td></tr>
        <tr><td><label><input type="checkbox" checked><svg><use href="#n-fit"/></svg>Fit Curve (27)</label></td><td><svg><use href="#ok"/></svg></td></tr>
        <tr><td><label><input type="checkbox" class="ban"><svg><use href="#n-fill"/></svg>填充曲面 (28)</label></td><td><svg><use href="#no"/></svg></td></tr>
        <tr><td><label><input type="checkbox" checked><svg><use href="#n-sk"/></svg>草图 (29) "SKETCH_...</label></td><td><svg><use href="#ok"/></svg></td></tr>
        <tr><td><label><input type="checkbox" checked><svg><use href="#n-sk"/></svg>草图 (30) "SKETCH_...</label></td><td><svg><use href="#ok"/></svg></td></tr>
        <tr><td><label><input type="checkbox" class="ban"><svg><use href="#n-fill"/></svg>填充曲面 (31)</label></td><td><svg><use href="#no"/></svg></td></tr>
        <tr><td><label><input type="checkbox" class="ban"><svg><use href="#n-ext"/></svg>延伸片体 (32)</label></td><td><svg><use href="#no"/></svg></td></tr>
        <tr><td><label><input type="checkbox" checked><svg><use href="#n-plane"/></svg>基准平面 (33)</label></td><td><svg><use href="#ok"/></svg></td></tr>
        <tr><td><label><input type="checkbox" checked><svg><use href="#n-spl"/></svg>样条 (34)</label></td><td><svg><use href="#ok"/></svg></td></tr>
        <tr><td><label><input type="checkbox" checked><svg><use href="#n-spl"/></svg>样条 (35)</label></td><td><svg><use href="#ok"/></svg></td></tr>
        <tr><td><label><input type="checkbox" checked><svg><use href="#n-spl"/></svg>样条 (36)</label></td><td><svg><use href="#ok"/></svg></td></tr>
        <tr><td><label><input type="checkbox" checked><svg><use href="#n-spl"/></svg>样条 (37)</label></td><td><svg><use href="#ok"/></svg></td></tr>
        </tbody>
      </table>
      </div>
      <div class="vbar"><svg><use href="#up"/></svg><i></i><svg><use href="#down"/></svg></div>
      <div class="hbar"><svg><use href="#left"/></svg><i></i><svg><use href="#right"/></svg></div>
    </div>
    <div class="grip"></div>
  </section>

  <section class="stage">
  <svg class="scene" viewBox="165 94 835 442" role="img" aria-label="电话听筒模型">
    <defs>
      <linearGradient id="gTop" gradientUnits="userSpaceOnUse" x1="340" y1="360" x2="700" y2="160"><stop offset="0" stop-color="#0aa3fb"/><stop offset=".5" stop-color="#00b2ff"/><stop offset="1" stop-color="#00c2ff"/></linearGradient>
      <linearGradient id="gHead" gradientUnits="userSpaceOnUse" x1="320" y1="400" x2="465" y2="390"><stop offset="0" stop-color="#68757a"/><stop offset=".35" stop-color="#7f8c90"/><stop offset=".7" stop-color="#8f9c9f"/><stop offset="1" stop-color="#869294"/></linearGradient>
      <linearGradient id="gHeadB" gradientUnits="userSpaceOnUse" x1="390" y1="345" x2="350" y2="460"><stop offset="0" stop-color="#0a9bff"/><stop offset=".5" stop-color="#0780e3"/><stop offset="1" stop-color="#086cc2"/></linearGradient>
      <radialGradient id="gRear" gradientUnits="userSpaceOnUse" cx="758" cy="198" r="75"><stop offset="0" stop-color="#dce6e7"/><stop offset=".35" stop-color="#b3bfc2"/><stop offset="1" stop-color="#7f8c90"/></radialGradient>
      <linearGradient id="gOr" x1="0" y1="1" x2="1" y2="0"><stop offset="0" stop-color="#704200"/><stop offset=".45" stop-color="#bb6d00"/><stop offset="1" stop-color="#f69308"/></linearGradient>
      <linearGradient id="gOrR" x1="0" y1="0" x2="0" y2="1"><stop offset="0" stop-color="#c87402"/><stop offset="1" stop-color="#915600"/></linearGradient>
      <linearGradient id="gCup" gradientUnits="userSpaceOnUse" x1="360" y1="480" x2="468" y2="390"><stop offset="0" stop-color="#003f74"/><stop offset=".5" stop-color="#0567ae"/><stop offset="1" stop-color="#0684dc"/></linearGradient>
      <linearGradient id="gSide" x1="0" y1="1" x2="1" y2="0"><stop offset="0" stop-color="#677274"/><stop offset=".6" stop-color="#7c8789"/><stop offset="1" stop-color="#9ba7a8"/></linearGradient>
      <filter id="rough" x="-5%" y="-5%" width="110%" height="110%" color-interpolation-filters="sRGB"><feTurbulence type="fractalNoise" baseFrequency=".25" numOctaves="2" seed="4"/><feDisplacementMap in="SourceGraphic" scale="7" xChannelSelector="R" yChannelSelector="G"/></filter>
      <clipPath id="cTop"><path d="M327 343C330 334 350 321 366 309 378 298 390 287 403 278 420 266 450 247 487 229 515 214 545 200 577 187 610 174 645 162 680 153L707 147C725 143 742 139 755 139 767 141 783 155 785 168 785 176 778 176 767 178L733 183C695 190 660 202 600 225 570 239 535 255 517 263 470 290 430 322 403 339L370 371C361 377 347 376 340 368 334 362 326 353 327 343z"/></clipPath>
      <clipPath id="cHead"><path d="M327 345C321 366 316 395 324 437 333 453 348 462 370 461 410 453 450 425 466 382 450 362 430 348 403 341L370 371C361 377 347 376 340 368z"/></clipPath>
      <clipPath id="cCup"><path d="M324 437C333 453 348 462 370 461 410 453 450 425 466 382L470 373 475 400C478 420 466 434 450 453 430 473 405 483 377 483 355 479 343 463 333 450z"/></clipPath>
      <clipPath id="cRear"><path d="M733 183L767 178 783 175 787 163C805 175 820 205 828 233 828 250 817 255 800 262 770 270 735 269 711 262 712 235 718 210 733 183z"/></clipPath>
      <clipPath id="cRCup"><path d="M667 236C680 226 700 238 711 262 735 269 770 270 800 262 818 255 823 249 827 242L822 277C810 293 780 297 750 297 715 296 694 280 677 265z"/></clipPath>
      <clipPath id="cSide"><path d="M403 341C430 322 470 292 517 265L563 243C610 221 670 198 733 184 718 210 712 235 711 262 701 240 688 224 661 235L600 262 517 298C490 312 466 330 464 355L466 381C450 362 430 348 403 341z"/></clipPath>
    </defs>
    <g stroke-linejoin="round">
      <!-- ear cup -->
      <g clip-path="url(#cRCup)">
        <path d="M660 225h170v80H660z" fill="url(#gOrR)"/>
        <g filter="url(#rough)"><path d="M725 262l45 6c-3 5 2 9 10 10l10 1 5 6 10-9 10-7 16-20v50h-105l-1-25z" fill="#065ea7"/></g>
        <path d="M673 242c10 12 25 16 38 19" fill="none" stroke="#6c3e00"/>
      </g>
      <path d="M667 236L672 252C680 270 695 281 707 288 722 296 735 297 750 297 790 297 815 290 822 277L827 242" fill="none" stroke="#5b3b12"/>
      <!-- underside of the grip -->
      <path d="M470 376C466 350 474 337 487 325 505 312 540 295 560 283L607 263 667 240C685 234 703 246 710 260 700 238 688 225 661 234L600 261 517 297C485 313 461 334 463 357L466 381z" fill="#0872c4" stroke="#17436b" stroke-width=".8"/>
      <path d="M469 370C467 346 480 330 500 317" fill="none" stroke="#e08812" stroke-width="2"/>
      <path d="M500 316L535 299" stroke="#d47a13"/>
      <!-- side of the grip -->
      <g clip-path="url(#cSide)">
        <path d="M400 170h340v215H400z" fill="url(#gSide)"/>
        <g filter="url(#rough)" fill="#0876d2">
          <path d="M412 338L450 311 492 285 533 265 531 272 515 283 495 291 480 301C466 311 452 328 447 340L444 352 450 358 438 354z"/>
          <path d="M576 242L600 230 640 218 680 204 728 192 722 204 700 207 680 216 650 222 620 233 590 243z"/>
          <path d="M664 226l32-8 22-4-5 24-14-12z" opacity=".6"/>
          <path d="M552 254l6 1-1 3-5-1z"/>
        </g>
        <path d="M466 381C461 335 475 321 517 299L600 263 661 236C688 225 701 240 711 262" fill="none" stroke="#312d29" stroke-width="4"/>
        <path d="M560 277L661 235C688 227 700 241 710 260" fill="none" stroke="#c98026" stroke-width="1.200" stroke-dasharray="9 1 4 2"/>
        <path d="M466 381C450 362 430 348 403 341" fill="none" stroke="#3a3e40" stroke-width="2.500" stroke-dasharray="5 1 2 1"/>
      </g>
      <!-- top face -->
      <g clip-path="url(#cTop)">
        <path d="M320 130h480v250H320z" fill="url(#gTop)"/>
        <g filter="url(#rough)" fill="#cbdadc">
          <path d="M570 193L583 188 603 179 620 179 640 173 660 165 683 158 707 152 717 147 750 141 760 138 773 146 784 161 773 163 740 167 707 173 673 182 653 191 640 195 620 200 603 210 580 215 560 212z"/>
          <path d="M478 257L500 244 525 234 560 218 566 222 530 239 500 250z"/>
          <path d="M470 272L500 256 530 243 575 224 582 228 548 243 510 258z"/>
          <path d="M486 272L515 259 545 246 580 232 606 213 612 211 600 224 565 239 545 243 512 262z"/>
          <path d="M500 266L530 251 570 233 603 212 608 214 585 233 545 251z"/>
          <path d="M515 227L540 216 562 203 588 190 604 190 596 206 570 216 545 218z"/>
          <path d="M533 209l18-8 8-2 2 4-16 6z"/>
          <path d="M331 353l14-2 10-13 19-9-3 7-14 13 8 0 10-5-12 12-15 11-12-5z"/>
        </g>
        <g fill="#00baff"><ellipse cx="544" cy="226" rx="7" ry="3" transform="rotate(-25 544 226)"/><ellipse cx="555" cy="220" rx="5" ry="2.500"/><ellipse cx="566" cy="215" rx="5" ry="2.500"/><ellipse cx="599" cy="192" rx="8" ry="3.500"/><ellipse cx="606" cy="199" rx="7" ry="3.500"/><ellipse cx="571" cy="204" rx="3" ry="1.500"/><ellipse cx="582" cy="201" rx="3" ry="1.200"/><ellipse cx="560" cy="209" rx="3" ry="1.500"/><ellipse cx="575" cy="210" rx="2" ry="1"/><ellipse cx="588" cy="205" rx="3" ry="1.200"/></g>
        <g fill="#cbdadc"><ellipse cx="653" cy="201" rx="2" ry="1"/><ellipse cx="626" cy="205" rx="2" ry="1"/><ellipse cx="636" cy="201" rx="1.500" ry="1"/><ellipse cx="512" cy="220" rx="2" ry="1"/><ellipse cx="466" cy="263" rx="2" ry="1"/><ellipse cx="671" cy="159" rx="2" ry="1"/></g>
        <path d="M403 341C430 320 470 290 517 263" fill="none" stroke="#1e8f98"/>
      </g>
      <path d="M327 343C330 334 350 321 366 309 378 298 390 287 403 278 420 266 450 247 487 229 515 214 545 200 577 187 610 174 645 162 680 153L707 147C725 143 742 139 755 139" fill="none" stroke="#4b5c67" stroke-width=".9"/>
      <!-- head, front -->
      <g clip-path="url(#cHead)">
        <path d="M310 335h160v135H310z" fill="url(#gHead)"/>
        <path d="M387 350l16-10 30 12-12 14z" fill="#c6d2d4" opacity=".8"/>
        <g filter="url(#rough)">
          <path d="M325 338L345 378 366 376 388 350 400 349 408 358 414 366 411 384 398 385 384 386 376 392 380 404 389 408 390 426 385 438 378 436 368 428 372 446 376 470 320 470 322 420 331 432 344 452 352 436 353 410 350 395 335 389 324 382z" fill="url(#gHeadB)"/>
          <path d="M327 392l10-2 14 4 2 14-6 10 1 22-4 12-10-8-8-14 3-14z" fill="#76848a"/>
          <path d="M412 389l10 0 12 14 3 13-4 11-12-1-7-14z" fill="#0879d8"/>
          <path d="M424 356l12 2 11 10 2 14-9 8-10-6-8-12z" fill="#0a86e8"/>
          <path d="M466 384l-8 14-6 12 12-8z" fill="#0a7ad0"/>
        </g>
        <path d="M355 407h4v2h-4zM362 405h3v3h-3zM369 404h3v2h-3zM350 417h4v3h-4zM360 416h5v3h-5z" fill="#8b989b"/>
        <path d="M327 345C321 366 316 395 324 437" fill="none" stroke="#52616a" stroke-width="1.500"/>
      </g>
      <path d="M327 345C333 362 340 368 347 373 358 378 368 374 375 368L403 341" fill="none" stroke="#8fd4e8" stroke-width="1.500"/>
      <path d="M327 347C333 364 342 373 350 376 362 378 370 373 378 367" fill="none" stroke="#3b5564" stroke-width=".7"/>
      <path d="M388 354l15-13" stroke="#e8f1f2" stroke-width="3"/>
      <!-- mouth cup -->
      <g clip-path="url(#cCup)">
        <path d="M310 370h170v120H310z" fill="url(#gOr)"/>
        <g filter="url(#rough)"><path d="M310 430L400 450 440 420 464 372 467 395 470 417 455 430 435 442 425 450 410 455 398 462 395 474 385 490 320 490z" fill="url(#gCup)"/></g>
      </g>
      <path d="M324 437C333 453 348 462 370 461 410 453 450 425 466 382" fill="none" stroke="#2b2f31" stroke-width="2"/>
      <path d="M333 450C343 463 355 479 377 483 405 483 430 473 450 453 466 434 478 420 475 400L470 373" fill="none" stroke="#4d3717" stroke-width=".8"/>
      <path d="M463 400l6 23" stroke="#234" stroke-width=".6"/>
      <!-- highlight ridge -->
      <path d="M403 341C430 320 470 291 517 264L563 242C610 220 670 196 733 183" fill="none" stroke="#59676b" stroke-width="7"/>
      <path d="M403 340C430 319 470 290 517 263L563 241C610 219 670 195 733 182" fill="none" stroke="#aebdc0" stroke-width="5"/>
      <path d="M460 297L517 263 563 241C610 219 670 195 728 183" fill="none" stroke="#e6f2f3" stroke-width="3"/>
      <path d="M403 336C430 317 470 287 517 260L563 238C610 216 670 192 733 180" fill="none" stroke="#2c7b86" stroke-width=".8"/>
      <circle cx="404" cy="341" r="2" fill="#f2f7f7" stroke="#677"/>
      <!-- head, rear -->
      <g clip-path="url(#cRear)">
        <path d="M700 155h140v120H700z" fill="url(#gRear)"/>
        <g filter="url(#rough)" fill="#0786ea">
          <path d="M791 160l12 12 15 25 16 40-10 8-6-2-6-14-3-26-10-22z"/>
          <path d="M713 242l20-6 12 4 14 3 5 12-12 7-26 0-16-3z"/>
          <path d="M803 222l12 4 8 12-4 8-14-6z"/>
        </g>
      </g>
      <path d="M755 139C767 141 783 155 785 168 785 176 778 176 767 178L733 183" fill="none" stroke="#dbe7e8" stroke-width="3"/>
      <path d="M755 139C775 145 785 158 787 170 784 179 770 180 733 185" fill="none" stroke="#454f53"/>
      <path d="M787 163C805 175 820 205 828 233" fill="none" stroke="#66757c"/>
      <path d="M711 262C735 269 770 270 800 262 817 255 828 250 828 233" fill="none" stroke="#262b2e" stroke-width="1.400"/>
      <path d="M733 185C718 210 712 235 711 262" fill="none" stroke="#28333a" stroke-width="2" stroke-dasharray="12 1 4 2"/>
    </g>
    <!-- work coordinate axes -->
    <g class="axis">
      <path d="M572 297l-3-6-9-7 4 8z" fill="#168a2a"/><path d="M573 297l12-8 11-4-8 7z" fill="#1d35e0"/><path d="M572 299l5 7 1 14-5-9z" fill="#9c1212"/><circle cx="572" cy="297" r="1.500" fill="#fff"/>
      <text x="589" y="283" fill="#3445d8">ZC</text><text x="567" y="326" fill="#b52b33">XC</text><text x="560" y="283" fill="#278a3a">YC</text>
      <path d="M196 491l8-3 9 5 2 10-8 5-10-5z" fill="#ccd0d2" stroke="#a6abae" stroke-width=".8"/><path d="M196 491l9 4 8-2M205 495l2 13" fill="none" stroke="#a6abae" stroke-width=".8"/>
      <path d="M200 499l-4-5-7-5 3 6z" fill="#168a2a"/><path d="M201 498l9-5 11-4-8 6z" fill="#1d35e0"/><path d="M200 500l4 6 2 12-4-8z" fill="#9c1212"/><circle cx="200" cy="499" r="1.500" fill="#fff"/>
      <text x="186" y="491" fill="#278a3a">Y</text><text x="221" y="491" fill="#3445d8">Z</text><text x="203" y="524" fill="#b52b33">X</text>
    </g>
    <g class="mark"><text x="664" y="245">来高</text><text class="reg" x="754" y="216">®</text><text class="three" x="771" y="247">3D</text><circle cx="764" cy="228" r="7"/></g>
  </svg>
  </section>
</main>

<footer class="status"><span>选择对象并使用 MB3，或者双击某一对象</span><svg><use href="#t-grid"/></svg><svg><use href="#v-b"/></svg></footer>
</div>
</body>
</html>
```

FILE: styles.css
```css
* { box-sizing: border-box; }
html, body { height: 100%; }
body { margin: 0; background: #fff; color: #222; font: 6px/8px "Noto Sans", "Noto Sans CJK SC", sans-serif; overflow: hidden; }
button, input, select { font: inherit; color: inherit; }
button { border: 0; padding: 0; background: none; display: inline-flex; align-items: center; justify-content: center; white-space: nowrap; }
svg { width: 10px; height: 10px; flex: none; display: block; }
.defs { display: none; }
.app { display: flex; flex-direction: column; height: 100vh; min-height: 400px; }

.caret, .drop::after { content: ""; flex: none; width: 4px; height: 2px; background: #222; clip-path: polygon(0 0, 100% 0, 50% 100%); }
.caret.dim { background: #aaa; }

.titlebar { display: flex; align-items: center; height: 14px; padding-right: 2px; }
.quick { display: flex; align-items: center; gap: 2px; }
.quick .save { margin-right: 3px; }
.quick .drop { gap: 2px; margin-right: 3px; }
.quick .wide { margin-right: 6px; }
.nx { width: 24px; padding-left: 2px; color: #6c8ba1; font-size: 12px; line-height: 14px; font-weight: 500; }
h1 { flex: 1; margin: 0; font-size: 7px; line-height: 13px; font-weight: 400; text-align: center; }
.brand { color: #0b9a94; font: bold 7px/13px "Liberation Sans", Arial, sans-serif; margin-right: 12px; }
.wins { display: flex; gap: 2px; }

.tabs { display: flex; align-items: stretch; height: 14px; padding-right: 2px; background: #c5d8d5; font-size: 7px; gap: 1px; }
.tabs > button { padding: 0 6px; }
.tabs .file { width: 42px; background: #4c8a80; color: #fff; margin-right: -1px; }
.tabs .on { width: 28px; background: #fff; color: #2f9ac0; }
.search { display: flex; align-items: center; width: 65px; height: 10px; margin: 2px 5px 0 auto; padding: 0 1px 0 0; background: #fff; border: 1px solid #d0dbd9; }
.search input { flex: 1; min-width: 0; border: 0; padding: 0 0 0 1px; height: 8px; font-size: 6px; background: none; }
.search input::placeholder { color: #999; }
.search svg { width: 8px; height: 8px; }
.tabs .tools { gap: 4px; margin-right: 1px; }
.tabs .wins svg { width: 9px; height: 9px; }
.tabs .wins button { width: 10px; }

.ribbon { display: flex; height: 49px; border-bottom: 1px solid #e4e4e4; }
.group { display: flex; flex-direction: column; flex: none; margin: 3px 0 1px; border-right: 1px dotted #cfcfcf; overflow: hidden; }
.group .body { display: flex; align-items: flex-start; flex: 1; }
.group footer { display: flex; align-items: center; justify-content: center; height: 9px; margin-top: auto; padding: 0 4px 0 2px; color: #338fb8; white-space: nowrap; }
.group footer .caret { margin-left: auto; }
.g-sketch footer, .g-feature footer, .g-sync footer, .g-dim footer, .g-asm footer { padding-left: 0; }
.g-sketch footer::before, .g-feature footer::before, .g-sync footer::before, .g-dim footer::before, .g-asm footer::before { content: ""; margin-right: auto; }
.g-sketch { width: 93px; }
.g-feature { width: 192px; }
.g-feature .body { padding-left: 5px; }
.g-sync { width: 89px; }
.g-surf { width: 22px; }
.g-std { width: 55px; }
.g-gear { width: 27px; }
.g-spring { width: 30px; }
.g-mach { width: 27px; }
.g-model { width: 51px; }
.g-tiny { width: 15px; }
.g-dim { width: 151px; }
.g-asm { width: 94px; }
.g-sync .body, .g-asm .body { padding-left: 2px; }
.group.g-tiny footer { padding: 0 2px; }
.rest { flex: 1; display: flex; align-items: flex-end; justify-content: flex-end; padding: 0 1px 5px 0; }

.big { flex-direction: column; justify-content: flex-start; width: 21px; height: 33px; }
.big svg { width: 16px; height: 16px; margin-bottom: 3px; }
.big .caret { margin-top: 2px; }
.g-sketch .big { width: 29px; }
.big.plane { width: 25px; }
.big.wide { width: 28px; }
.big.more svg { width: 20px; height: 17px; padding: 3px 5px; border: 1px solid #eee; margin-bottom: 2px; }
.big:disabled { color: #bbb; }
.g-surf .big { width: 22px; }
.gallery { display: grid; grid-template-columns: repeat(3, 1fr); grid-template-rows: 1fr 1fr; width: 51px; height: 34px; margin-left: 1px; border: 1px solid #e4e4e4; }
.gallery svg { width: 12px; height: 12px; }
.pager { display: flex; flex-direction: column; justify-content: space-around; align-items: center; width: 10px; height: 34px; }
.list { display: flex; flex-direction: column; align-items: flex-start; gap: 1px; width: 38px; }
.g-feature .list { padding-left: 2px; width: 41px; }
.g-feature .list + .big + .list { width: 33px; padding: 0; }
.list button { gap: 1px; height: 10px; }
.list .drop::after { margin-left: 3px; }

.icons { display: flex; flex-direction: column; gap: 5px; padding: 3px 0 0 3px; }
.icons div { display: flex; gap: 2px; }
.icons button { width: 10px; height: 10px; }
.icons .split { margin-left: 3px; position: relative; }
.icons .split::before { content: ""; position: absolute; left: -3px; top: 0; bottom: 0; width: 1px; background: #ddd; }
.num { flex-direction: column; font: 4px/4px "Liberation Sans", sans-serif; }
.num b { font-weight: 700; color: #555; }
.num em { font-style: normal; color: #c33; }
.num.box em { border: 1px solid #d66; }
.num.blue b { color: #55c; }

.toolbar { display: flex; align-items: center; height: 17px; border-bottom: 2px solid #a8aaad; padding: 0 1px 0 4px; }
.toolbar .drop { gap: 2px; }
.menu { width: 40px; margin-right: 7px; }
.toolbar select { appearance: none; height: 11px; width: 70px; margin-right: 4px; padding: 0 2px; border: 1px solid #bcbcbc; border-radius: 0; background: linear-gradient(135deg, #222 50%, transparent 50%) no-repeat right 2px center / 2px 2px, linear-gradient(225deg, #222 50%, transparent 50%) no-repeat right 4px center / 2px 2px, #fff; }
.toolbar select + select { width: 73px; }
.strip { display: flex; gap: 3px; padding: 0 5px 0 0; }
.view { padding: 0 6px; border-left: 1px solid #ddd; border-right: 1px solid #ddd; }
.end { margin: 5px 0 0 auto; }

main { flex: 1; display: flex; min-height: 0; }
.dock { display: flex; flex-direction: column; width: 14px; background: #dadada; }
.dock button { height: 17px; flex: none; padding-left: 2px; margin-bottom: 1px; }
.dock button:first-child { height: 13px; padding: 0; width: 12px; }
.dock .skip { margin-top: 6px; }
.dock button:first-child + .skip { margin-top: 8px; }
.dock .on { background: #fff; }

.panel { display: flex; flex-direction: column; width: 151px; padding-right: 4px; background: #f4f4f4; border-right: 2px solid #aaa; }
h2 { display: flex; justify-content: space-between; align-items: center; height: 15px; margin: 0; padding: 0 4px; background: #fff; font-size: 6px; font-weight: 400; }
h2 button { width: 6px; height: 6px; border: 1px solid #222; border-top-width: 2px; }
.tree { flex: 1; min-height: 0; display: grid; grid-template: 1fr 10px / 1fr 9px; padding-left: 2px; background: #fff; }
.clip { overflow: hidden; min-height: 0; }
table { width: 100%; table-layout: fixed; border-collapse: collapse; }
th { height: 11px; padding: 0 4px; background: #ececec; font-weight: 400; text-align: left; border-right: 1px solid #ddd; }
th:last-child { width: 30px; }
.sort { display: inline-block; margin: 0 0 2px 10px; width: 5px; height: 3px; background: #222; clip-path: polygon(50% 0, 100% 100%, 0 100%); }
td { height: 10px; padding: 0; color: #a0a0a0; line-height: 9px; border-bottom: 1px solid #f2f2f2; border-right: 1px solid #eee; white-space: nowrap; overflow: hidden; }
tbody tr:nth-child(5n+2) td, tbody tr:nth-child(5n+4) td { height: 11px; }
td:first-child { padding-left: 15px; }
td:last-child { padding-left: 3px; }
td svg { width: 9px; height: 9px; }
td:last-child svg { width: 7px; height: 7px; }
.live td, .root td { color: #222; }
.root td:first-child { padding-left: 4px; display: flex; align-items: center; gap: 2px; }
.twist { width: 4px; }
td label { display: flex; align-items: center; gap: 1px; border-left: 1px solid #ddd; }
td label::before { content: ""; width: 3px; border-top: 1px dotted #ccc; margin-right: 1px; }
td input { appearance: none; flex: none; width: 7px; height: 7px; margin: 0; border: 1px solid #777; background: #fff; }
td input::after { content: ""; display: block; width: 5px; height: 5px; }
td input:checked::after { background: #0f9f1d; clip-path: polygon(0 40%, 40% 60%, 100% 0, 100% 40%, 40% 100%, 0 80%); }
td .ban::after { width: 6px; height: 6px; border-radius: 50%; border: 1px solid #d22; background: linear-gradient(45deg, #fff 35%, #d22 35%, #d22 65%, #fff 65%); }
.vbar { display: flex; flex-direction: column; align-items: center; padding-top: 12px; background: #f4f4f4; }
.vbar svg { width: 8px; height: 8px; }
.vbar i { width: 8px; height: 19%; margin: 5px 0 auto; background: #c9c9c9; }
.hbar { display: flex; align-items: center; grid-column: 1 / -1; background: #f2f2f2; }
.hbar svg { width: 8px; height: 8px; }
.hbar i { width: 52%; height: 8px; margin: 0 auto 0 2px; background: #c9c9c9; }
.grip { height: 3px; margin: 2px 0; background: #c4c4c4; }

.stage { flex: 1; min-width: 0; background: linear-gradient(#b8b9bb, #d0d1d4 45%, #e7e9ed); }
.scene { width: 100%; height: 100%; }
.axis text { font: 7px "Liberation Sans", sans-serif; }
.mark { font: 100 44px "Noto Sans CJK SC", sans-serif; fill: #2d3438; opacity: .85; }
.mark .reg { font: 19px "Liberation Serif", serif; }
.mark .three { font: 100 52px "Noto Sans CJK SC", sans-serif; }
.mark circle { fill: #e0475a; }

.status { display: flex; align-items: center; height: 11px; padding: 0 28px 0 2px; border-top: 1px solid #ddd; color: #111; }
.status span { margin-right: auto; }
```
